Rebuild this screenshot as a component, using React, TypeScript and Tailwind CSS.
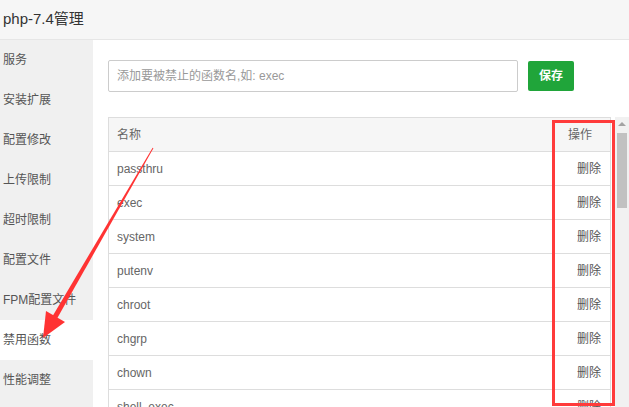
import React from "react";

const menu = [
  "服务",
  "安装扩展",
  "配置修改",
  "上传限制",
  "超时限制",
  "配置文件",
  "FPM配置文件",
  "禁用函数",
  "性能调整",
];

const funcs = ["passthru", "exec", "system", "putenv", "chroot", "chgrp", "chown", "shell_exec"];

const font = { fontFamily: '"Liberation Sans", "Noto Sans CJK SC", sans-serif' };

export default function App() {
  return (
    <div className="relative w-[629px] h-[407px] overflow-hidden bg-white text-[#666]" style={font}>
      <div className="h-[40px] bg-[#f6f6f6] border-b border-[#e6e6e6] flex items-center pl-[3px] text-[15px] text-[#333]">
        php-7.4管理
      </div>
      <div className="flex h-[367px]">
        <div className="w-[93px] shrink-0 bg-[#f0f0f0]">
          {menu.map((m) => (
            <div
              key={m}
              className={`h-[40px] leading-[40px] pl-[3px] text-[12px] text-[#555] ${
                m === "禁用函数" ? "bg-white" : ""
              }`}
            >
              {m}
            </div>
          ))}
        </div>
        <div className="flex-1 pl-[15px] pt-[20px]">
          <div className="flex gap-[10px]">
            <input
              type="text"
              placeholder="添加要被禁止的函数名,如: exec"
              className="w-[410px] h-[32px] border border-[#ccc] rounded-[2px] px-[8px] text-[12px] outline-none placeholder:text-[#999]"
            />
            <button className="mt-[1px] w-[46px] h-[30px] rounded-[2px] bg-[#20a53a] text-white text-[12px] font-bold">
              保存
            </button>
          </div>
          <div className="mt-[25px] flex">
            <div className="w-[503px] border-x border-t border-[#ddd]">
              <div className="h-[34px] bg-[#f6f6f6] border-b border-[#ddd] flex items-center justify-between pl-[8px] pr-[18px] text-[12px]">
                <span>名称</span>
                <span>操作</span>
              </div>
              {funcs.map((f) => (
                <div
                  key={f}
                  className="h-[34px] border-b border-[#ddd] flex items-center justify-between pl-[8px] pr-[9px] text-[12px]"
                >
                  <span>{f}</span>
                  <span className="text-[#555]">删除</span>
                </div>
              ))}
            </div>
            <div className="ml-[4px] w-[14px] h-[290px] bg-[#f1f1f1] flex flex-col items-center">
              <div className="mt-[5px] w-0 h-0 border-x-[4px] border-x-transparent border-b-[4px] border-b-[#a3a3a3]" />
              <div className="mt-[7px] w-[10px] h-[75px] bg-[#c1c1c1]" />
            </div>
          </div>
        </div>
      </div>

      <div className="absolute left-[552px] top-[120px] w-[63px] h-[286px] border-[3px] border-[#ff3b3b]" />

      <svg className="absolute left-0 top-0 pointer-events-none" width="629" height="407">
        <polygon points="153.4,148.3 152.6,147.7 52.8,315.7 57.2,318.3" fill="#f33" />
        <polygon points="43,338 46,311 65,322" fill="#f33" />
      </svg>
    </div>
  );
}
